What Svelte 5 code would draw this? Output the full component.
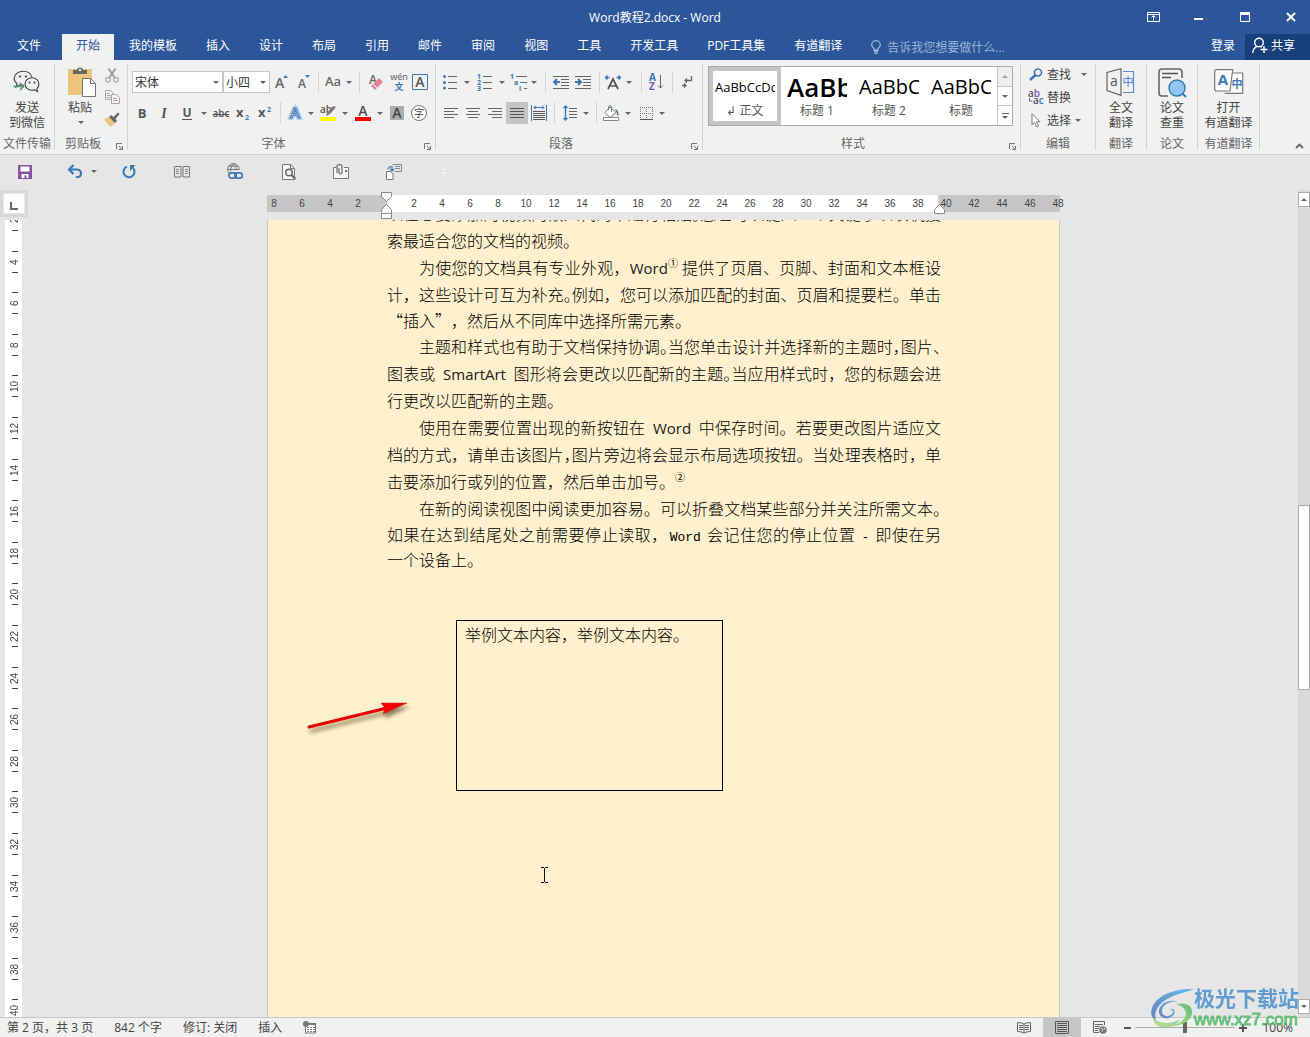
<script lang="ts">
  type Tool = { name: string; label: string; w: number; on?: boolean };

  const tabs = [
    '文件', '开始', '我的模板', '插入', '设计', '布局', '引用', '邮件',
    '审阅', '视图', '工具', '开发工具', 'PDF工具集', '有道翻译',
  ];
  let activeTab = $state('开始');
  let fontName = $state('宋体');
  let fontSize = $state('小四');
  let zoom = $state(100);

  const windowControls = [
    { name: 'ribbonOptions', label: '功能区显示选项' },
    { name: 'minimize', label: '最小化' },
    { name: 'maximize', label: '最大化' },
    { name: 'close', label: '关闭' },
  ];

  const sep = (w: number): Tool => ({ name: 'sep', label: '', w });
  const gap = (w: number): Tool => ({ name: 'gap', label: '', w });
  const caret = (w: number): Tool => ({ name: 'caret', label: '更多选项', w });

  const fontRow1: Tool[] = [
    { name: 'grow', label: '增大字号', w: 24 },
    { name: 'shrink', label: '减小字号', w: 20 },
    sep(9),
    { name: 'changeCase', label: '更改大小写', w: 20 },
    caret(12),
    sep(9),
    { name: 'eraser', label: '清除格式', w: 24 },
    { name: 'pinyin', label: '拼音指南', w: 22 },
    { name: 'charBorder', label: '字符边框', w: 20 },
  ];

  const fontRow2: Tool[] = [
    { name: 'bold', label: '加粗', w: 20 },
    { name: 'italic', label: '倾斜', w: 24 },
    { name: 'underline', label: '下划线', w: 22 },
    caret(12),
    { name: 'strike', label: '删除线', w: 22 },
    { name: 'sub', label: '下标', w: 22 },
    { name: 'sup', label: '上标', w: 22 },
    sep(9),
    { name: 'effects', label: '文本效果', w: 20 },
    caret(12),
    { name: 'highlight', label: '突出显示', w: 22 },
    caret(12),
    { name: 'fontColor', label: '字体颜色', w: 24 },
    caret(10),
    { name: 'shade', label: '字符底纹', w: 24 },
    { name: 'circled', label: '带圈字符', w: 20 },
  ];

  const paraRow1: Tool[] = [
    { name: 'bullets', label: '项目符号', w: 20 },
    caret(14),
    { name: 'numbers', label: '编号', w: 22 },
    caret(12),
    { name: 'multilevel', label: '多级列表', w: 22 },
    caret(8),
    sep(14),
    { name: 'outdent', label: '减少缩进量', w: 18 },
    { name: 'indent', label: '增加缩进量', w: 26 },
    sep(6),
    { name: 'asian', label: '中文版式', w: 22 },
    caret(10),
    sep(14),
    { name: 'sort', label: '排序', w: 16 },
    sep(16),
    { name: 'marks', label: '显示编辑标记', w: 14 },
  ];

  const paraRow2: Tool[] = [
    { name: 'alignLeft', label: '左对齐', w: 22 },
    { name: 'alignCenter', label: '居中', w: 22 },
    { name: 'alignRight', label: '右对齐', w: 22 },
    { name: 'alignJustify', label: '两端对齐', w: 22, on: true },
    { name: 'distribute', label: '分散对齐', w: 22 },
    sep(8),
    { name: 'spacing', label: '行和段落间距', w: 24 },
    caret(8),
    sep(12),
    { name: 'bucket', label: '底纹', w: 20 },
    caret(12),
    { name: 'borders', label: '边框', w: 24 },
    caret(8),
  ];

  const styleItems = [
    { sample: 'AaBbCcDd', name: '↲ 正文', kind: 'body' },
    { sample: 'AaBb', name: '标题 1', kind: 'h1' },
    { sample: 'AaBbC', name: '标题 2', kind: 'h2' },
    { sample: 'AaBbC', name: '标题', kind: 'h2' },
  ];

  const bigGroups = [
    { icon: 'translate', lines: ['全文', '翻译'], label: '翻译', w: 51 },
    { icon: 'paper', lines: ['论文', '查重'], label: '论文', w: 51 },
    { icon: 'youdao', lines: ['打开', '有道翻译'], label: '有道翻译', w: 62 },
  ];

  const quickAccess: Tool[] = [
    { name: 'save', label: '保存', w: 50 },
    gap(12),
    { name: 'undo', label: '撤消', w: 26 },
    caret(12),
    { name: 'redo', label: '重复', w: 58 },
    { name: 'readPages', label: '双页', w: 48 },
    { name: 'link', label: '超链接', w: 58 },
    { name: 'preview', label: '打印预览', w: 50 },
    { name: 'attach', label: '电子邮件', w: 54 },
    { name: 'switchDoc', label: '比较文档', w: 52 },
    { name: 'customize', label: '自定义快速访问工具栏', w: 50 },
  ];

  const rulerNumbers = Array.from({ length: 29 }, (_, i) => Math.abs(i * 2 - 8));

  // two characters of vertical ruler, rounded so that ticks stay sharp
  const unit = 41.6;
  const verticalNumbers = Array.from({ length: 20 }, (_, i) => ({
    value: i * 2 + 2,
    height: Math.round((i + 1) * unit) - Math.round(i * unit),
  }));

  const statusItems = ['第 2 页，共 3 页', '842 个字', '修订: 关闭', '插入'];

  const G = '#666';
  const B = '#3b78b5';

  const lines = (rows: number[][], color = G) =>
    rows.map(([x, y, w]) => `<rect x="${x}" y="${y}" width="${w}" height="1" fill="${color}"/>`).join('');

  // [width, height, markup]
  const icons: Record<string, [number, number, string]> = {
    caret: [6, 3, `<path d="M0 0h6L3 3z" fill="#666"/>`],
    ribbonOptions: [13, 10, `<path d="M.5.5h12v9H.5zM.5 2.5h12M6.500 8.500v-5M4.500 5.500l2-2 2 2" fill="none" stroke="#fff"/>`],
    minimize: [10, 10, `<rect y="6" width="9" height="2" fill="#fff"/>`],
    maximize: [10, 10, `<path d="M.5.5h9v9H.5z" fill="none" stroke="#fff"/><path d="M0 0h10v3H0z" fill="#fff"/>`],
    close: [10, 10, `<path d="M1 1l8 8M9 1L1 9" stroke="#fff" stroke-width="2"/>`],
    bulb: [10, 14, `<path d="M3 10V8.500C1.500 7.500.7 6.300.7 4.800.7 2.500 2.500.7 5 .7s4.300 1.800 4.300 4.100c0 1.500-.8 2.700-2.300 3.700V10zM3 11.500h4M3.500 13.300h3" fill="none" stroke="#9db4d6" stroke-width="1.300"/>`],
    person: [16, 17, `<circle cx="7" cy="5.500" r="4.300" fill="none" stroke="#fff" stroke-width="1.400"/><path d="M.7 16c.2-3.400 2-5.800 4.600-6.700M8.500 9.500l1.200.6M12 9v7M8.500 12.500h7" fill="none" stroke="#fff" stroke-width="1.400"/>`],
    wechat: [28, 24, `<path d="M11 15c-1.500.5-3 .3-4.500-.2L3 17l1-3.500C1.700 11.800 1 9.800 1.200 7.800 1.700 4 5.500 1.300 10 1.300c4.700 0 8.200 2.600 9 6.200" fill="none" stroke="#444" stroke-width="1.100"/><path d="M19 7.700c-4.200 0-7 3-7 6.300s2.800 6.300 7 6.300c1 0 2-.2 2.800-.5l2.700 1.700-.6-2.900c1.300-1.200 2-2.800 2-4.600 0-3.300-2.700-6.300-6.900-6.300z" fill="#f1f1f1" stroke="#444" stroke-width="1.100"/><g fill="#444"><circle cx="7" cy="6.500" r="1.100"/><circle cx="13" cy="6.500" r="1.100"/><circle cx="16.500" cy="12.500" r="1"/><circle cx="21.500" cy="12.500" r="1"/></g><path d="M.5 16.500h9.500M7 13l3.500 3.500L7 20" fill="none" stroke="#4d9c6c" stroke-width="1.500"/>`],
    paste: [28, 30, `<path d="M0 2h24v26H0z" fill="#ecc47c"/><path d="M5 3h4c0-1.700 1.200-2.500 3-2.500S15 1.300 15 3h4v4H5z" fill="#666"/><circle cx="12" cy="3" r="1.200" fill="#f1f1f1"/><path d="M14.500 11.500h8l5 5v13h-13z" fill="#fff" stroke="#777"/><path d="M22.500 11.500v5h5" fill="none" stroke="#777"/>`],
    cut: [14, 15, `<path d="M3.500.5l6 9M10.500.5l-6 9" stroke="#999" stroke-width="1.800"/><circle cx="3" cy="11.800" r="2.300" fill="none" stroke="#aaa" stroke-width="1.300"/><circle cx="11" cy="11.800" r="2.300" fill="none" stroke="#aaa" stroke-width="1.300"/>`],
    copy: [15, 14, `<path d="M.5.500h5l2.500 2.500v6.500H.5z" fill="#f4f0f4" stroke="#aaa4ac"/><path d="M6.500 4.500h5l3 3v6h-8z" fill="#f4f0f4" stroke="#aaa4ac"/>${lines([[2, 3, 3], [2, 5, 4], [2, 7, 4], [8, 8, 4], [8, 10, 5]], '#aaa4ac')}`],
    brush: [16, 15, `<path d="M0 7l5-2 6 6-4 4c-2.500-2-5-4-7-8z" fill="#ecc47c"/><path d="M5 5l2-2 2.500 2L14 .5l1.500 1.500L11.500 7l1.500 2-2 2z" fill="#666"/>`],
    grow: [14, 14, `<text x="0" y="13" font-size="14" font-weight="600" fill="${G}">A</text><path d="M8 3h5l-2.500-3z" fill="${B}"/>`],
    shrink: [14, 14, `<text x="1" y="13" font-size="12" font-weight="600" fill="${G}">A</text><path d="M8 0h5l-2.500 3z" fill="${B}"/>`],
    changeCase: [16, 14, `<text x="0" y="11" font-size="13" font-weight="600" fill="${G}">Aa</text>`],
    eraser: [14, 16, `<text x="0" y="10" font-size="12" font-weight="600" fill="${G}">A</text><path d="M2 12l8-8 4 4-8 8z" fill="#e88294"/><path d="M4 10l4 4" stroke="#f1f1f1"/>`],
    pinyin: [16, 16, `<text x="8" y="6" font-size="9" font-weight="500" text-anchor="middle" fill="#555">wén</text><text x="8" y="16" font-size="9" font-weight="700" text-anchor="middle" fill="${B}">文</text>`],
    charBorder: [16, 16, `<path d="M.5.5h15v15H.5z" fill="none" stroke="${B}"/><text x="8" y="13" font-size="14" font-weight="600" text-anchor="middle" fill="#555">A</text>`],
    bold: [10, 14, `<text x="5" y="12" font-size="13" font-weight="700" text-anchor="middle" fill="#555">B</text>`],
    italic: [10, 14, `<text x="5" y="12" font-size="14" font-weight="700" font-style="italic" text-anchor="middle" fill="#555" font-family="Liberation Serif, serif">I</text>`],
    underline: [10, 14, `<text x="5" y="11" font-size="12" font-weight="700" text-anchor="middle" fill="#555">U</text><rect x="0" y="13" width="10" height="1" fill="#555"/>`],
    strike: [16, 14, `<text x="8" y="11" font-size="10" font-weight="600" text-anchor="middle" fill="#555">abc</text><rect y="8" width="16" height="1" fill="#555"/>`],
    sub: [14, 14, `<text x="0" y="11" font-size="13" font-weight="700" fill="#555">x</text><text x="9" y="14" font-size="7" font-weight="700" fill="${B}">2</text>`],
    sup: [14, 14, `<text x="0" y="11" font-size="13" font-weight="700" fill="#555">x</text><text x="9" y="6" font-size="7" font-weight="700" fill="${B}">2</text>`],
    effects: [14, 16, `<text x="7" y="13" font-size="15" font-weight="600" text-anchor="middle" fill="#fff" stroke="#b7d2ec" stroke-width="4">A</text><text x="7" y="13" font-size="15" font-weight="600" text-anchor="middle" fill="#fff" stroke="${B}" stroke-width="1">A</text>`],
    highlight: [16, 16, `<text x="0" y="8" font-size="10" font-weight="600" fill="#555">ab</text><path d="M6 11l1-3 6-7 3 1-6 7z" fill="#777"/><rect y="12" width="16" height="4" fill="#ff0"/>`],
    fontColor: [16, 16, `<text x="8" y="11" font-size="14" font-weight="600" text-anchor="middle" fill="#555">A</text><rect y="12" width="16" height="4" fill="#f00"/>`],
    shade: [14, 14, `<rect width="14" height="14" fill="#acacac"/><text x="7" y="12" font-size="14" font-weight="600" text-anchor="middle" fill="#444">A</text>`],
    circled: [16, 16, `<circle cx="8" cy="8" r="7.500" fill="#fff" stroke="#777"/><text x="8" y="12" font-size="10" text-anchor="middle" fill="#444">字</text>`],
    bullets: [14, 14, `<g fill="${B}"><circle cx="1.500" cy="1.500" r="1.500"/><circle cx="1.500" cy="7.500" r="1.500"/><circle cx="1.500" cy="13" r="1.500"/></g>${lines([[5, 1, 9], [5, 7, 9], [5, 13, 9]])}`],
    numbers: [14, 16, `<g fill="${B}" font-size="7" font-weight="700"><text x="-1" y="5">1</text><text x="-1" y="11">2</text><text x="-1" y="17">3</text></g>${lines([[5, 2, 9], [5, 8, 9], [5, 14, 9]])}`],
    multilevel: [16, 16, `<g fill="${B}" font-size="7" font-weight="700"><text x="-1" y="5">1</text><text x="3" y="11">a</text><text x="8" y="17">i</text></g>${lines([[5, 2, 11], [9, 8, 7], [13, 14, 3]])}`],
    outdent: [16, 13, `${lines([[0, 0, 16], [8, 3, 8], [8, 6, 8], [8, 9, 8], [0, 12, 16]])}<path d="M7 6H2M4 3L1 6l3 3" fill="none" stroke="${B}" stroke-width="2"/>`],
    indent: [16, 13, `${lines([[0, 0, 16], [8, 3, 8], [8, 6, 8], [8, 9, 8], [0, 12, 16]])}<path d="M0 6h5M3 3l3 3-3 3" fill="none" stroke="${B}" stroke-width="2"/>`],
    asian: [16, 14, `<path d="M3 14L8 4l5 10M5 11h6" fill="none" stroke="#555" stroke-width="1.700"/><path d="M2.500.5L.5 2.500l2 2M.5 2.500h4M13.500.5l2 2-2 2M15.500 2.500h-4" fill="none" stroke="${B}" stroke-width="1.400"/>`],
    sort: [14, 16, `<text x="0" y="7" font-size="10" font-weight="700" fill="${B}">A</text><text x="0" y="16" font-size="10" font-weight="700" fill="#8a4fb0">Z</text><path d="M11.500 1v13M9 11.500l2.500 2.500 2.500-2.500" fill="none" stroke="${G}"/>`],
    marks: [12, 14, `<path d="M10.500 1v4.500H4M6 3.500l-2 2 2 2M1 10.500h4M3 8.500l2 2-2 2" fill="none" stroke="${G}" stroke-width="1.300"/>`],
    alignLeft: [14, 11, lines([[0, 0, 14], [0, 3, 10], [0, 6, 14], [0, 9, 10]])],
    alignCenter: [14, 11, lines([[0, 0, 14], [2, 3, 10], [0, 6, 14], [2, 9, 10]])],
    alignRight: [14, 11, lines([[0, 0, 14], [4, 3, 10], [0, 6, 14], [4, 9, 10]])],
    alignJustify: [14, 11, lines([[0, 0, 14], [0, 3, 14], [0, 6, 14], [0, 9, 14]], '#555')],
    distribute: [16, 16, `<path d="M.5 0v16M15.500 0v16M3 2.500h10M5 .5l-2 2 2 2M11 .5l2 2-2 2" fill="none" stroke="${B}"/>${lines([[2, 6, 12], [2, 8, 12], [2, 10, 12], [2, 12, 12], [2, 14, 12]], '#555')}`],
    spacing: [15, 16, `<path d="M2.500 1v5M.5 3l2-2 2 2M2.500 6v9M.5 13l2 2 2-2" fill="none" stroke="${B}" stroke-width="1.400"/>${lines([[6, 3, 8], [6, 6, 8], [6, 9, 8], [6, 12, 8]])}`],
    bucket: [18, 16, `<path d="M7 2l6 5.500-6 5-5-5z" fill="#fff" stroke="#777"/><path d="M5.500 5V1.500q1.500-2 3 0V7" fill="none" stroke="#777"/><path d="M12 4q4 1 3.500 7-2-1-2-4z" fill="${B}"/><path d="M.5 12.500h15v3H.5z" fill="#fff" stroke="#888"/>`],
    borders: [13, 13, `<path d="M.5 0v12M6.500 0v12M12.500 0v12M0 .5h13M0 6.500h13" stroke="#777" stroke-dasharray="1 1"/><rect y="12" width="13" height="1" fill="#555"/>`],
    launcher: [7, 7, `<path d="M.5 6V.5H6M3 3l3 3M6.500 3v3.500H3" fill="none" stroke="#777"/>`],
    find: [14, 13, `<circle cx="9" cy="4.500" r="3.500" fill="none" stroke="${B}" stroke-width="1.600"/><path d="M6.500 7L1 12" stroke="${B}" stroke-width="2.400"/>`],
    replace: [16, 17, `<text x="0" y="8" font-size="10" font-weight="600" fill="#555">a<tspan fill="#8a4fb0">b</tspan></text><text x="5" y="15" font-size="10" font-weight="600" fill="#555">a<tspan fill="${B}">c</tspan></text><path d="M1.500 9v3H4.500" fill="none" stroke="${B}"/>`],
    select: [12, 15, `<path d="M2 .8v11l2.600-2.300 1.800 4.300 2-.9-1.800-4.100H10z" fill="#fff" stroke="#777"/>`],
    translate: [30, 28, `<path d="M15 .7v26.600L1 22.500V4.500z" fill="none" stroke="#666" stroke-width="1.200"/><path d="M17 3.500h10.500v21H17" fill="none" stroke="#5a8fd8" stroke-width="1.200"/><text x="8" y="18" font-size="14" text-anchor="middle" fill="#555">a</text><text x="22" y="18" font-size="11" text-anchor="middle" fill="#3f7fd8">中</text>`],
    paper: [28, 29, `<path d="M24 10V4q0-3-3-3H4Q1 1 1 4v21q0 3 3 3h6" fill="none" stroke="#666" stroke-width="1.600"/><path d="M4 5.500h16M4 9.500h9" stroke="#555" stroke-width="1.600"/><circle cx="19" cy="20" r="8" fill="#93c4f4" stroke="#2f7fa8" stroke-width="1.400"/><path d="M24.500 25.500l3.500 3.500" stroke="#2f7fa8" stroke-width="2"/>`],
    youdao: [30, 26, `<path d="M10.700 24.300h18V4H18" fill="#fff" stroke="#777" stroke-width="1.200"/><path d="M.7 2.500q0-1.800 2-1.800h16L16 22H2.500q-1.800 0-1.800-2z" fill="#fff" stroke="#777" stroke-width="1.200"/><text x="9" y="16" font-size="15" font-weight="700" text-anchor="middle" fill="${B}">A</text><text x="23" y="19" font-size="11" font-weight="700" text-anchor="middle" fill="${B}">中</text>`],
    save: [14, 14, `<path d="M0 0h14v14H0z" fill="#8650a4"/><path d="M2.500 1.500h9v5h-9zM3.500 9h7v4h-2v-2.500h-2V13h-3z" fill="#fff"/>`],
    undo: [15, 13, `<path d="M2 4.500h7q4 .3 4 4t-4 3.500H8" fill="none" stroke="${B}" stroke-width="2.200"/><path d="M5.500 0L1 4.500 5.500 9" fill="none" stroke="${B}" stroke-width="2.200"/>`],
    redo: [14, 14, `<path d="M5 1.600A5.500 5.500 0 1 0 11 3" fill="none" stroke="${B}" stroke-width="2"/><path d="M8 0h5.500L8 6z" fill="${B}"/>`],
    readPages: [16, 12, `<path d="M.5.500h6.500v10.500H.5zM9 .5h6.500v10.500H9z" fill="none" stroke="#777"/>${lines([[2, 3, 3], [2, 5, 3], [2, 7, 3], [11, 3, 3], [11, 5, 3], [11, 7, 3]], '#888')}`],
    link: [17, 17, `<path d="M6.500.7a5.500 5.500 0 0 0-5.800 5.800c0 2 .8 3.300 1.600 4M6.500.7a5.500 5.500 0 0 1 5.600 6M.7 6.500h11.500M2 3.200h9M6.500.7c-3 3-3 6-2.500 7.500M6.500.7c2.500 3 2.700 4.500 2.500 6.500" fill="none" stroke="#777"/><rect x="1.800" y="9.800" width="7.500" height="5.400" rx="2.700" fill="none" stroke="${B}" stroke-width="1.700"/><rect x="7.800" y="9.800" width="7.500" height="5.400" rx="2.700" fill="none" stroke="${B}" stroke-width="1.700"/>`],
    preview: [15, 16, `<path d="M.5.500h8l4 4v11H.5z" fill="#f7f7f7" stroke="#777"/><path d="M8.500.5v4h4" fill="none" stroke="#777"/><circle cx="7" cy="8.500" r="3.300" fill="#eee" stroke="#666" stroke-width="1.500"/><path d="M9.500 11l4 4" stroke="#666" stroke-width="2"/>`],
    attach: [16, 15, `<path d="M3 3.500H.5v11h15v-11H11" fill="#f5f5f5" stroke="#777"/><path d="M4 9V3q0-2.500 2.500-2.500T9 3v5.500q0 1.500-1.500 1.500T6 8.500V4" fill="none" stroke="#666" stroke-width="1.200"/><rect x="12" y="6" width="2" height="2" fill="${B}"/>`],
    switchDoc: [16, 16, `<path d="M6.500.5h9v7h-7" fill="none" stroke="#888"/>${lines([[9, 2, 5], [9, 4, 5]], '#888')}<path d="M.5 7.500h4l2.500 2.500v5.500H.5z" fill="#fff" stroke="#777"/><path d="M2 5q.5-2.500 4-2.500v4M4 5l2 2 2-2" fill="none" stroke="${B}" stroke-width="1.200"/>`],
    customize: [6, 6, `<path d="M0 0h5v1H0zM0 3h5L2.500 5.500z" fill="#f8f8f8"/>`],
    collapse: [9, 6, `<path d="M1 5l3.500-3.500L8 5" fill="none" stroke="#666" stroke-width="1.800"/>`],
    macro: [14, 13, `<path d="M4 2.500h8.500v9.500H2.500V6" fill="#fff" stroke="#777"/><rect x="6" y="2" width="7" height="2" fill="#777"/><circle cx="3" cy="3" r="3" fill="#777"/>${lines([[4, 6, 2], [7, 6, 2], [10, 6, 2], [4, 8, 2], [7, 8, 2], [10, 8, 2], [4, 10, 2], [7, 10, 2], [10, 10, 2]], '#888')}`],
    readView: [14, 13, `<path d="M.5 1.500q4 0 6.500 1.500 2.500-1.500 6.500-1.500v9q-4 0-6.500 1.500-2.500-1.500-6.500-1.500zM7 3v9" fill="none" stroke="#666"/>${lines([[2, 4, 4], [2, 6, 4], [2, 8, 4], [8, 4, 4], [8, 6, 4], [8, 8, 4]])}`],
    printView: [14, 13, `<path d="M.5.500h13v12H.5z" fill="none" stroke="#555"/>${lines([[2, 2, 10], [2, 4, 10], [2, 6, 10], [2, 8, 10], [2, 10, 10]], '#555')}`],
    webView: [15, 13, `<path d="M6 11.500H.5V.5h11V4" fill="none" stroke="#666"/>${lines([[2, 3, 8], [2, 5, 5], [2, 7, 4], [2, 9, 3]])}<circle cx="10" cy="9" r="3.800" fill="#777"/><path d="M8 7.500l2 1-1 2M11 6.500l1 2" stroke="#ddd" fill="none"/>`],
  };
</script>

{#snippet icon(name: string)}
  <svg
    class="icon"
    width={icons[name][0]}
    height={icons[name][1]}
    viewBox="0 0 {icons[name][0]} {icons[name][1]}"
    aria-hidden="true"
  >{@html icons[name][2]}</svg>
{/snippet}

{#snippet toolbar(tools: Tool[])}
  {#each tools as t}
    {#if t.name === 'sep' || t.name === 'gap'}
      <span class={t.name} style="width: {t.w}px"></span>
    {:else}
      <button class="tool" class:on={t.on} style="width: {t.w}px" aria-label={t.label}>
        {@render icon(t.name)}
      </button>
    {/if}
  {/each}
{/snippet}

<div class="app">
  <header class="titlebar">
    <span></span>
    <h1>Word教程2.docx - Word</h1>
    <div class="window-controls">
      {#each windowControls as c}
        <button aria-label={c.label}>{@render icon(c.name)}</button>
      {/each}
    </div>
  </header>

  <nav class="tabs">
    {#each tabs as tab}
      <button class="tab" class:active={tab === activeTab} onclick={() => (activeTab = tab)}>{tab}</button>
    {/each}
    <button class="tell-me">{@render icon('bulb')}<span>告诉我您想要做什么...</span></button>
    <button class="login">登录</button>
    <button class="share">{@render icon('person')}<span>共享</span></button>
  </nav>

  <div class="ribbon">
    <section class="group send">
      <button class="big">
        <span class="pic">{@render icon('wechat')}</span>
        <span>发送</span><span>到微信</span>
      </button>
      <h2>文件传输</h2>
    </section>

    <section class="group clipboard">
      <div class="clip-row">
        <button class="big">
          <span class="pic">{@render icon('paste')}</span>
          <span>粘贴</span>
          <span class="drop">{@render icon('caret')}</span>
        </button>
        <div class="clip-small">
          <button class="tool" aria-label="剪切">{@render icon('cut')}</button>
          <button class="tool" aria-label="复制">{@render icon('copy')}</button>
          <button class="tool" aria-label="格式刷">{@render icon('brush')}</button>
        </div>
      </div>
      <h2>剪贴板</h2>
      <button class="launcher" aria-label="剪贴板设置">{@render icon('launcher')}</button>
    </section>

    <section class="group font">
      <div class="row">
        <div class="combo name">
          <select bind:value={fontName} aria-label="字体"><option>宋体</option><option>黑体</option></select>
          {@render icon('caret')}
        </div>
        <div class="combo size">
          <select bind:value={fontSize} aria-label="字号"><option>小四</option><option>四号</option></select>
          {@render icon('caret')}
        </div>
        {@render toolbar(fontRow1)}
      </div>
      <div class="row">{@render toolbar(fontRow2)}</div>
      <h2>字体</h2>
      <button class="launcher" aria-label="字体设置">{@render icon('launcher')}</button>
    </section>

    <section class="group para">
      <div class="row">{@render toolbar(paraRow1)}</div>
      <div class="row">{@render toolbar(paraRow2)}</div>
      <h2>段落</h2>
      <button class="launcher" aria-label="段落设置">{@render icon('launcher')}</button>
    </section>

    <section class="group styles">
      <div class="gallery">
        {#each styleItems as s, i}
          <button class="style-item" class:selected={i === 0}>
            <span class="sample {s.kind}">{s.sample}</span>
            <span class="style-name">{s.name}</span>
          </button>
        {/each}
        <div class="gallery-scroll">
          <button class="up" aria-label="上一行" disabled>{@render icon('caret')}</button>
          <button aria-label="下一行">{@render icon('caret')}</button>
          <button class="more" aria-label="其他">{@render icon('caret')}</button>
        </div>
      </div>
      <h2>样式</h2>
      <button class="launcher" aria-label="样式设置">{@render icon('launcher')}</button>
    </section>

    <section class="group editing">
      <div class="edit-list">
        <button><span class="edit-icon">{@render icon('find')}</span>查找<span class="edit-caret far">{@render icon('caret')}</span></button>
        <button><span class="edit-icon">{@render icon('replace')}</span>替换</button>
        <button><span class="edit-icon">{@render icon('select')}</span>选择<span class="edit-caret">{@render icon('caret')}</span></button>
      </div>
      <h2>编辑</h2>
    </section>

    {#each bigGroups as g}
      <section class="group" style="width: {g.w}px">
        <button class="big">
          <span class="pic">{@render icon(g.icon)}</span>
          {#each g.lines as line}<span>{line}</span>{/each}
        </button>
        <h2>{g.label}</h2>
      </section>
    {/each}

    <button class="collapse" aria-label="折叠功能区">{@render icon('collapse')}</button>
  </div>

  <div class="quick-access">{@render toolbar(quickAccess)}</div>

  <main class="workspace">
    <div class="corner"><button aria-label="左对齐式制表符"><span></span></button></div>

    <div class="ruler-row">
      <div class="ruler">
        <div class="ruler-numbers">
          {#each rulerNumbers as n}<span>{n === 0 ? '' : n}</span>{/each}
        </div>
        <svg class="marker start" width="12" height="28" viewBox="0 0 12 28" aria-hidden="true">
          <path d="M.5.500h10v4l-5 5-5-5zM.5 21.500v-4l5-5 5 5v4zM.5 21.500h10v5H.5z" fill="#fff" stroke="#888" />
        </svg>
        <svg class="marker end" width="12" height="11" viewBox="0 0 12 11" aria-hidden="true">
          <path d="M.5 9.500v-4l5-5 5 5v4z" fill="#fff" stroke="#888" />
        </svg>
      </div>
    </div>

    <div class="vruler">
      {#each verticalNumbers as v}
        <div class="vcell" style="height: {v.height}px"><span>{v.value}</span></div>
      {/each}
    </div>

    <div class="canvas">
      <article class="page">
        <div class="body-text">
          <p>以在想要添加的视频的嵌入代码中进行粘贴<i>。</i>您也可以键入一个关键字以联机搜</p>
          <p class="last">索最适合您的文档的视频。</p>
          <p class="first">为使您的文档具有专业外观，<b>Word</b><sup>①</sup> 提供了页眉、页脚、封面和文本框设</p>
          <p>计，这些设计可互为补充<i>。</i>例如，您可以添加匹配的封面、页眉和提要栏。单击</p>
          <p class="last tight">“插入”，然后从不同库中选择所需元素。</p>
          <p class="first">主题和样式也有助于文档保持协调<i>。</i>当您单击设计并选择新的主题时<i>，</i>图片<i>、</i></p>
          <p>图表或 <b class="apart">SmartArt</b> 图形将会更改以匹配新的主题<i>。</i>当应用样式时，您的标题会进</p>
          <p class="last">行更改以匹配新的主题。</p>
          <p class="first">使用在需要位置出现的新按钮在 <b class="apart">Word</b> 中保存时间。若要更改图片适应文</p>
          <p>档的方式，请单击该图片<i>，</i>图片旁边将会显示布局选项按钮。当处理表格时，单</p>
          <p class="last">击要添加行或列的位置，然后单击加号。<sup>②</sup></p>
          <p class="first">在新的阅读视图中阅读更加容易。可以折叠文档某些部分并关注所需文本<i>。</i></p>
          <p class="tight">如果在达到结尾处之前需要停止读取，<code>Word</code> 会记住您的停止位置 <code>-</code> 即使在另</p>
          <p class="last tight">一个设备上。</p>
          <div class="text-box">举例文本内容，举例文本内容。</div>
        </div>
        <svg class="arrow" width="106" height="38" viewBox="0 0 106 38" aria-hidden="true">
          <path d="M2 29L78 10.500" stroke="#e80000" stroke-width="3" stroke-linecap="round" />
          <path d="M74 5l26 0L76 16l2-6z" fill="#f00" stroke="#a33" stroke-width=".5" />
        </svg>
        <svg class="cursor" width="8" height="16" viewBox="0 0 8 16" aria-hidden="true">
          <path d="M0 .5h3M4 .5h3M3.500 1v14M0 15.500h3M4 15.500h3" stroke="#111" fill="none" />
        </svg>
      </article>
    </div>

    <div class="scrollbar">
      <button class="up" aria-label="向上滚动">{@render icon('caret')}</button>
      <div class="track"><div class="thumb"></div></div>
      <button aria-label="向下滚动">{@render icon('caret')}</button>
    </div>
  </main>

  <footer class="status">
    <div class="status-items">
      {#each statusItems as s}<span>{s}</span>{/each}
      <button aria-label="录制宏">{@render icon('macro')}</button>
    </div>
    <div class="views">
      <button aria-label="阅读视图">{@render icon('readView')}</button>
      <button class="current" aria-label="页面视图">{@render icon('printView')}</button>
      <button aria-label="Web 版式视图">{@render icon('webView')}</button>
    </div>
    <div class="zoom">
      <button aria-label="缩小" onclick={() => (zoom -= 10)}><span class="minus"></span></button>
      <input type="range" min="10" max="190" bind:value={zoom} aria-label="显示比例" />
      <button aria-label="放大" onclick={() => (zoom += 10)}><span class="minus plus"></span></button>
    </div>
    <span>{zoom}%</span>
  </footer>

  <div class="watermark">
    <svg width="44" height="42" viewBox="0 0 44 42" aria-hidden="true">
      <defs>
        <linearGradient id="wm-blue" x1="1" y1="0" x2="0" y2="1">
          <stop offset="0" stop-color="#4fb4e6" />
          <stop offset="1" stop-color="#4f74bb" />
        </linearGradient>
        <linearGradient id="wm-green" x1="1" y1="0" x2="0" y2="1">
          <stop offset="0" stop-color="#4db56a" />
          <stop offset="1" stop-color="#b5dc6a" />
        </linearGradient>
      </defs>
      <path d="M44 1C24 0 6 8 2 20c-2 6 0 10 4 12-2-6 0-13 8-19C22 7 34 5 44 1z" fill="url(#wm-blue)" />
      <path d="M30 14c-10-2-18 3-18 9 0 5 6 7 10 3 2-2 1-5-2-4 2-3 6 0 4 4-3 6-13 6-15-1-1-8 8-15 21-11z" fill="url(#wm-blue)" />
      <path d="M26 16c9-2 17 1 16 9-1 9-12 14-24 13 9-1 17-5 18-12 0-5-4-8-10-10z" fill="url(#wm-green)" />
      <path d="M3 30c8 7 20 6 27 1-3 6-10 10-20 8-4-1-6-4-7-9z" fill="url(#wm-green)" opacity=".8" />
    </svg>
    <div>
      <strong>极光下载站</strong>
      <em>www.xz7.com</em>
    </div>
  </div>
</div>

<style>
  :global(body) {
    margin: 0;
    background: #e6e6e6;
  }

  .app {
    position: relative;
    display: flex;
    flex-direction: column;
    height: 100vh;
    overflow: hidden;
    background: #e6e6e6;
    color: #444;
    font-family: "Open Sans", "Noto Sans CJK SC", sans-serif;
    font-size: 12px;
  }

  button {
    display: flex;
    align-items: center;
    justify-content: center;
    margin: 0;
    padding: 0;
    border: 0;
    background: none;
    color: inherit;
    font: inherit;
    white-space: nowrap;
  }

  h1, h2, p {
    margin: 0;
    font-weight: inherit;
  }

  .icon {
    display: block;
    flex: none;
    overflow: visible;
  }

  .titlebar {
    display: grid;
    grid-template-columns: 1fr auto 1fr;
    align-items: center;
    height: 34px;
    background: #2b579a;
    color: #fff;
  }

  h1 {
    font-size: 12px;
  }

  .window-controls {
    display: flex;
    justify-content: flex-end;
    gap: 16px;
    padding-right: 4px;
  }

  .window-controls button {
    width: 30px;
    height: 32px;
  }

  .tabs {
    display: flex;
    gap: 1px;
    height: 26px;
    background: #2b579a;
    color: #fff;
  }

  .tab {
    padding: 0 14px 4px;
  }

  .tab:first-child {
    width: 61px;
    padding: 0 3px 4px 0;
  }

  .tab.active {
    background: #f1f1f1;
    color: #2b579a;
  }

  .tell-me {
    gap: 6px;
    margin: 0 auto 0 14px;
    color: #9db4d6;
  }

  .login {
    padding: 0 9px 4px;
  }

  .share {
    gap: 3px;
    padding: 0 15px 4px 7px;
    background: #173f7c;
  }

  .ribbon {
    display: flex;
    height: 94px;
    border-bottom: 1px solid #d2d2d2;
    background: #f1f1f1;
  }

  .group {
    position: relative;
    display: flex;
    flex: none;
    flex-direction: column;
    box-sizing: border-box;
    margin: 4px 0;
    border-right: 1px solid #d2d2d2;
  }

  .group h2 {
    margin-top: auto;
    color: #666;
    font-size: 12px;
    line-height: 12px;
    text-align: center;
    white-space: nowrap;
  }

  .launcher {
    position: absolute;
    right: 4px;
    bottom: 0;
  }

  .send {
    width: 55px;
  }

  .clipboard {
    width: 73px;
  }

  .clipboard h2 {
    padding-right: 16px;
  }

  .font {
    width: 308px;
    padding-left: 4px;
  }

  .font h2 {
    padding-right: 20px;
  }

  .para {
    width: 267px;
    padding-left: 4px;
  }

  .para h2 {
    padding-right: 20px;
  }

  .styles {
    width: 318px;
    padding-left: 5px;
  }

  .styles h2 {
    padding-right: 22px;
  }

  .editing {
    width: 75px;
  }

  .big {
    flex-direction: column;
    line-height: 15px;
  }

  .pic {
    display: flex;
    align-items: center;
    height: 36px;
  }

  .clip-row {
    display: flex;
    padding-left: 13px;
  }

  .clip-row .big {
    align-items: flex-start;
    width: 29px;
  }

  .drop {
    display: flex;
    align-items: center;
    height: 15px;
    padding-left: 10px;
  }

  .clip-small {
    display: flex;
    flex-direction: column;
    margin-left: 7px;
  }

  .row {
    display: flex;
    height: 22px;
    margin-top: 7px;
  }

  .row + .row {
    margin-top: 9px;
  }

  .tool {
    height: 22px;
    flex: none;
  }

  .tool.on {
    background: #c5c5c5;
  }

  .sep {
    flex: none;
    background: linear-gradient(#d5d5d5, #d5d5d5) center / 1px 100% no-repeat;
  }

  .gap {
    flex: none;
  }

  .combo {
    position: relative;
    display: flex;
    align-items: center;
  }

  .combo.name {
    width: 91px;
  }

  .combo.size {
    width: 47px;
  }

  .combo select {
    width: 100%;
    height: 22px;
    padding: 0 2px;
    border: 1px solid #c6c6c6;
    border-radius: 0;
    appearance: none;
    background: #fff;
    color: #333;
    font: inherit;
  }

  .combo :global(svg) {
    position: absolute;
    right: 4px;
    pointer-events: none;
  }

  .gallery {
    display: flex;
    width: 303px;
    height: 58px;
    margin-top: 2px;
    border: 1px solid #ababab;
    background: #fff;
  }

  .style-item {
    flex-direction: column;
    box-sizing: border-box;
    width: 72px;
    padding: 4px;
    border: 0 solid #c5c5c5;
    overflow: hidden;
  }

  .style-item.selected {
    padding: 0;
    border-width: 4px;
  }

  .sample {
    width: 60px;
    height: 30px;
    overflow: hidden;
    color: #000;
    line-height: 30px;
    text-align: left;
  }

  .sample.body {
    font-size: 13px;
  }

  .sample.h1 {
    font-size: 26px;
    font-weight: 600;
  }

  .sample.h2 {
    font-size: 20px;
  }

  .style-name {
    line-height: 18px;
    color: #555;
  }

  .gallery-scroll {
    display: flex;
    flex: 1;
    flex-direction: column;
    border-left: 1px solid #c6c6c6;
  }

  .gallery-scroll button {
    flex: 1;
  }

  .gallery-scroll button + button {
    border-top: 1px solid #c6c6c6;
  }

  .gallery-scroll .up {
    background: #e6e6e6;
    opacity: 0.6;
  }

  .up :global(svg) {
    transform: rotate(180deg);
  }

  .more {
    flex-direction: column;
    gap: 2px;
  }

  .more::before {
    width: 7px;
    height: 1px;
    background: #666;
    content: "";
  }

  .edit-list button {
    height: 23px;
    padding-bottom: 3px;
  }

  .edit-icon {
    display: flex;
    justify-content: center;
    width: 20px;
    margin: 0 1px 0 5px;
  }

  .edit-caret {
    margin-left: 4px;
  }

  .edit-caret.far {
    margin-left: 10px;
  }

  .collapse {
    align-self: flex-end;
    margin: 0 6px 5px auto;
  }

  .quick-access {
    display: flex;
    align-items: center;
    box-sizing: border-box;
    height: 35px;
    padding-bottom: 2px;
  }

  .workspace {
    display: grid;
    flex: 1;
    grid-template-columns: 29px minmax(0, 1fr) 12px;
    grid-template-rows: 30px minmax(0, 1fr);
    min-height: 0;
  }

  .corner {
    grid-area: 1 / 1;
    box-sizing: border-box;
    width: 28px;
    height: 27px;
    padding: 3px;
    background: #d8d8d8;
  }

  .corner button {
    width: 22px;
    height: 21px;
    border: 1px solid #e8e8e8;
    background: #fcfcfc;
  }

  .corner span {
    width: 6px;
    height: 6px;
    margin-top: 4px;
    border: solid #666;
    border-width: 0 0 2px 2px;
  }

  .ruler-row {
    grid-area: 1 / 2;
    padding-top: 5px;
  }

  .ruler {
    position: relative;
    width: 793px;
    height: 17px;
    margin: 0 auto;
    background: linear-gradient(to right, #c6c6c6 120px, #fff 120px 670px, #e6e6e6 670px 672px, #c6c6c6 672px);
  }

  .ruler-numbers {
    display: flex;
    margin-left: -7px;
    color: #444;
    font: 10px/17px "Liberation Sans", sans-serif;
  }

  .ruler-numbers span {
    flex: none;
    width: 28px;
    text-align: center;
  }

  .marker {
    position: absolute;
  }

  .marker.start {
    top: -3px;
    left: 114px;
  }

  .marker.end {
    top: 9px;
    left: 667px;
  }

  .vruler {
    grid-area: 2 / 1;
    box-sizing: border-box;
    width: 17px;
    margin-left: 5px;
    padding-left: 3px;
    overflow: hidden;
    background: #fff;
    color: #444;
    font: 10px/14px "Liberation Sans", sans-serif;
  }

  .vcell {
    display: flex;
    align-items: center;
    justify-content: center;
  }

  .vcell:first-child {
    margin-top: -21px;
  }

  .vcell span {
    height: 22px;
    background:
      linear-gradient(#444, #444) center top / 6px 1px no-repeat,
      linear-gradient(#444, #444) center bottom / 6px 1px no-repeat;
    text-align: center;
    transform: rotate(180deg);
    writing-mode: vertical-rl;
  }

  .canvas {
    grid-area: 2 / 2;
    overflow: hidden;
  }

  .page {
    position: relative;
    box-sizing: border-box;
    width: 793px;
    height: 100%;
    margin: 0 auto;
    padding: 0 118px 0 119px;
    overflow: hidden;
    border: solid #c6c6c6;
    border-width: 0 1px;
    background: #fff1ce;
    color: #000;
    font-family: "Noto Sans CJK SC", sans-serif;
    font-size: 16px;
    font-weight: 300;
  }

  .body-text {
    margin-top: -20px;
    text-spacing-trim: space-all;
  }

  .body-text p {
    height: 27px;
    line-height: 27px;
    text-align: justify;
    text-align-last: justify;
    white-space: nowrap;
  }

  .body-text p.tight {
    height: 25px;
    line-height: 25px;
  }

  .body-text p.first {
    padding-left: 32px;
  }

  .body-text p.last {
    text-align-last: left;
  }

  /* half-width punctuation */
  i {
    font-style: normal;
    font-feature-settings: "halt";
  }

  b {
    color: #222;
    font-family: "Open Sans", sans-serif;
    font-size: 15px;
    font-weight: 400;
  }

  b.apart {
    padding: 0 4px;
  }

  code {
    padding: 0 2px;
    font-family: "Liberation Mono", monospace;
    font-size: 13px;
    font-weight: 400;
  }

  sup {
    font-size: 10px;
    font-weight: 400;
    line-height: 1;
    vertical-align: 7px;
  }

  .text-box {
    box-sizing: border-box;
    width: 267px;
    height: 171px;
    margin: 48px 0 0 69px;
    padding: 0 8px;
    border: 1px solid #000;
    line-height: 27px;
  }

  .arrow {
    position: absolute;
    top: 478px;
    left: 39px;
    filter: drop-shadow(2px 4px 2px rgba(60, 40, 0, 0.6));
  }

  .cursor {
    position: absolute;
    top: 647px;
    left: 273px;
  }

  .scrollbar {
    display: flex;
    grid-row: 1 / 3;
    grid-column: 3;
    flex-direction: column;
    padding: 2px 0 3px;
    background: #dadada;
  }

  .scrollbar button {
    box-sizing: border-box;
    height: 15px;
    border: 1px solid #ababab;
    background: #fff;
  }

  .track {
    flex: 1;
    padding-top: 298px;
  }

  .thumb {
    box-sizing: border-box;
    height: 185px;
    border: 1px solid #ababab;
    background: #fff;
  }

  .status {
    display: flex;
    align-items: center;
    gap: 15px;
    box-sizing: border-box;
    height: 20px;
    padding: 0 17px 0 7px;
    border-top: 1px solid #c6c6c6;
    background: #f1f1f1;
    line-height: 17px;
    white-space: nowrap;
  }

  .status-items {
    display: flex;
    gap: 21px;
  }

  .views {
    display: flex;
    align-self: stretch;
    margin-left: auto;
  }

  .views button {
    width: 38px;
  }

  .views .current {
    background: #c6c6c6;
  }

  .zoom {
    display: flex;
    align-items: center;
    gap: 4px;
    margin-left: -11px;
  }

  .zoom button {
    width: 8px;
    height: 17px;
  }

  .minus {
    width: 7px;
    height: 2px;
    background: #555;
  }

  .plus {
    width: 8px;
    height: 8px;
    background:
      linear-gradient(#555, #555) center / 100% 2px no-repeat,
      linear-gradient(#555, #555) center / 2px 100% no-repeat;
  }

  input[type="range"] {
    width: 100px;
    height: 12px;
    margin: 0;
    appearance: none;
    background: linear-gradient(#aaa, #aaa) center / 100% 1px no-repeat;
  }

  input[type="range"]::-webkit-slider-thumb {
    width: 4px;
    height: 11px;
    appearance: none;
    background: #666;
  }

  .watermark {
    position: absolute;
    right: 11px;
    bottom: 6px;
    display: flex;
    align-items: center;
    opacity: 0.85;
    pointer-events: none;
  }

  .watermark strong,
  .watermark em {
    display: block;
    font-style: normal;
    line-height: 22px;
    white-space: nowrap;
  }

  .watermark strong {
    color: #4a8fd0;
    font-size: 21px;
    font-weight: 700;
  }

  .watermark em {
    color: #53b96a;
    font: 17px/22px "Liberation Sans", sans-serif;
    -webkit-text-stroke: 1px #53b96a;
  }
</style>
